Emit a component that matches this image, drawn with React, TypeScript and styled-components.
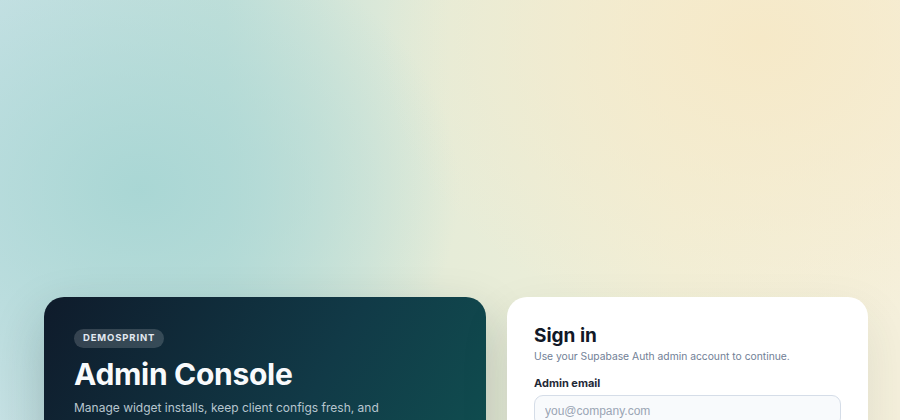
import React from "react";
import styled, { createGlobalStyle } from "styled-components";

const GlobalStyle = createGlobalStyle`
  html, body {
    margin: 0;
    padding: 0;
  }
  body {
    font-family: "Inter", "Noto Sans", sans-serif;
    background: #eef0df;
  }
`;

const Page = styled.div`
  min-height: 420px;
  box-sizing: border-box;
  padding: 297px 32px 40px 44px;
  background:
    radial-gradient(ellipse 320px 260px at 140px 190px, rgba(168, 214, 212, 0.95), rgba(168, 214, 212, 0) 100%),
    radial-gradient(ellipse 380px 300px at 760px 40px, rgba(246, 233, 200, 1), rgba(246, 233, 200, 0) 100%),
    linear-gradient(90deg, #c6e1e4 0%, #c2e0da 25%, #e6ecd8 50%, #f1efd8 75%, #f5f0dc 100%);
`;

const Layout = styled.div`
  display: grid;
  grid-template-columns: 442px 361px;
  gap: 21px;
  align-items: start;
`;

const HeroCard = styled.section`
  border-radius: 20px;
  padding: 28px 30px 32px;
  min-height: 300px;
  background: linear-gradient(120deg, #0f1b2b 0%, #113a47 50%, #0f5a55 100%);
  box-shadow: 0 20px 50px rgba(15, 40, 50, 0.22);
  color: #fff;
`;

const Badge = styled.span`
  display: inline-block;
  padding: 3.5px 9px;
  border-radius: 999px;
  background: rgba(255, 255, 255, 0.16);
  color: #e2e8f0;
  font-size: 9.5px;
  font-weight: 700;
  letter-spacing: 0.09em;
  line-height: 12px;
`;

const Title = styled.h1`
  margin: 8px 0 7px;
  font-size: 30px;
  font-weight: 700;
  letter-spacing: -0.01em;
  line-height: 36px;
  color: #f8fafc;
`;

const Lead = styled.p`
  margin: 0;
  max-width: 320px;
  font-size: 12px;
  line-height: 18px;
  color: #b7c6cf;
`;

const FormCard = styled.section`
  border-radius: 20px;
  padding: 28px 27px 28px;
  background: #fff;
  box-shadow: 0 20px 50px rgba(40, 60, 50, 0.1);
`;

const FormTitle = styled.h2`
  margin: 0;
  font-size: 19px;
  font-weight: 700;
  line-height: 22px;
  color: #111827;
`;

const Hint = styled.p`
  margin: 2px 0 13px;
  font-size: 10.3px;
  line-height: 14px;
  color: #718096;
`;

const Label = styled.label`
  display: block;
  margin-bottom: 5px;
  font-size: 11px;
  font-weight: 700;
  color: #1f2937;
`;

const Input = styled.input`
  display: block;
  width: 100%;
  box-sizing: border-box;
  height: 32px;
  padding: 0 10px;
  border: 1px solid #d5dde8;
  border-radius: 9px;
  background: #f8fafc;
  font-family: "Liberation Sans", Arial, sans-serif;
  font-size: 12px;
  color: #1f2937;
  &::placeholder {
    color: #9aa5b4;
  }
`;

export default function App() {
  return (
    <>
      <GlobalStyle />
      <Page>
        <Layout>
          <HeroCard>
            <Badge>DEMOSPRINT</Badge>
            <Title>Admin Console</Title>
            <Lead>
              Manage widget installs, keep client configs fresh, and review
              every change in one place.
            </Lead>
          </HeroCard>
          <FormCard>
            <FormTitle>Sign in</FormTitle>
            <Hint>Use your Supabase Auth admin account to continue.</Hint>
            <Label htmlFor="email">Admin email</Label>
            <Input id="email" type="email" placeholder="you@company.com" />
          </FormCard>
        </Layout>
      </Page>
    </>
  );
}
